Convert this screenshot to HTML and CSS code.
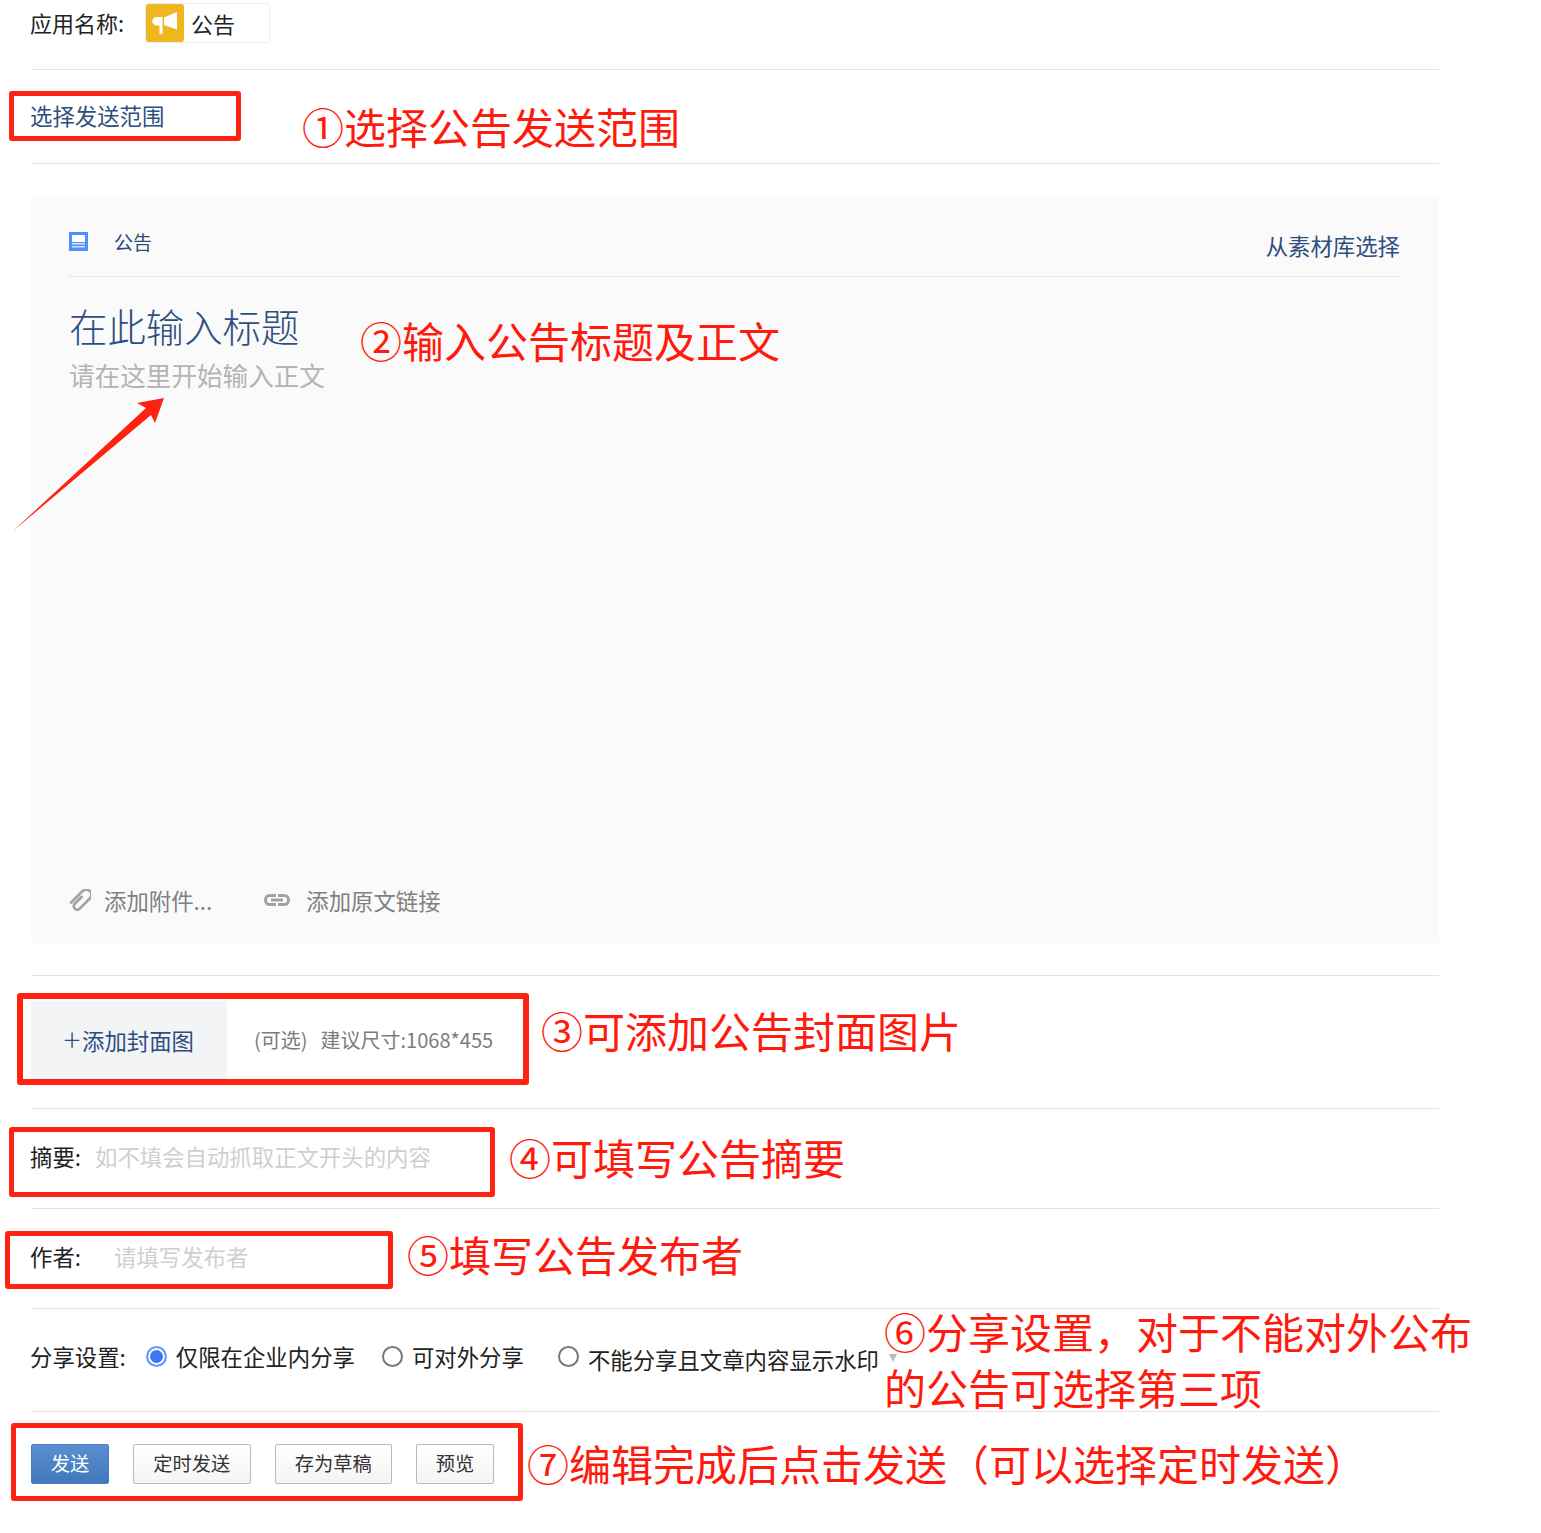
FILE: index.html
```html
<!DOCTYPE html>
<html lang="zh-CN">
<head>
  <meta charset="UTF-8" />
  <title>公告</title>
  <link rel="stylesheet" href="styles.css">
</head>
<body>
  <div class="page">

    <!-- App name -->
    <div class="row row-app">
      <span class="app-label">应用名称:</span>
      <div class="app-chip">
        <span class="app-icon">
          <svg viewBox="0 0 38 38" width="38" height="38" fill="#fff">
            <path d="M10.500 13H16.500V30H13.500V21.500H10.500A4.200 4.200 0 0 1 10.500 13z"/>
            <path d="M18 13.500L31 8V25.500L18 21z"/>
          </svg>
        </span>
        <span class="app-name">公告</span>
      </div>
    </div>

    <!-- Scope -->
    <div class="row row-scope">
      <a class="link">选择发送范围</a>
    </div>

    <!-- Editor -->
    <div class="editor-wrap">
      <div class="editor">
        <div class="editor-head">
          <div class="editor-type">
            <svg viewBox="0 0 19 19" width="19" height="19">
              <rect width="19" height="19" fill="#4d8ffb"/>
              <rect x="3" y="3" width="13" height="7" fill="#fff"/>
              <rect x="3" y="11" width="13" height="1.500" fill="#d5e4fe"/>
              <rect x="3" y="14" width="13" height="1.500" fill="#d5e4fe"/>
            </svg>
            <span>公告</span>
          </div>
          <a class="link library">从素材库选择</a>
        </div>
        <div class="editor-title">在此输入标题</div>
        <div class="editor-body">请在这里开始输入正文</div>
        <div class="editor-foot">
          <span class="foot-item">
            <svg viewBox="0 0 22 22" width="22" height="22" fill="none" stroke="#a3a3a3" stroke-width="2.400" stroke-linecap="round">
              <g transform="translate(11.500 11.500) rotate(45) scale(1.150)">
                <path d="M-1.500 -3V5.500a3 3 0 0 0 6 0V-7a4.500 4.500 0 0 0-9 0V7"/>
              </g>
            </svg>
            添加附件...
          </span>
          <span class="foot-item foot-link">
            <svg viewBox="0 0 26 12" width="26" height="12" fill="none" stroke="#a3a3a3" stroke-width="3">
              <path d="M12 1.500H5.500C3 1.500 1.500 3.500 1.500 6S3 10.500 5.500 10.500H12M14 1.500h6.500C23 1.500 24.500 3.500 24.500 6S23 10.500 20.500 10.500H14M7 6h12"/>
            </svg>
            添加原文链接
          </span>
        </div>
      </div>
    </div>

    <!-- Cover -->
    <div class="row row-cover">
      <div class="cover-btn"><span class="plus">＋</span>添加封面图</div>
      <div class="cover-hint"><span class="cover-opt">(可选)</span>建议尺寸:1068*455</div>
    </div>

    <!-- Summary -->
    <div class="row row-summary">
      <span>摘要:</span>
      <span class="placeholder summary-ph">如不填会自动抓取正文开头的内容</span>
    </div>

    <!-- Author -->
    <div class="row row-author">
      <span>作者:</span>
      <span class="placeholder author-ph">请填写发布者</span>
    </div>

    <!-- Share -->
    <div class="row row-share">
      <span>分享设置:</span>
      <span class="radio radio-on"></span>
      <span class="radio-text">仅限在企业内分享</span>
      <span class="radio radio-b"></span>
      <span class="radio-text">可对外分享</span>
      <span class="radio radio-c"></span>
      <span class="radio-text radio-text-c">不能分享且文章内容显示水印</span>
      <span class="caret"></span>
    </div>

    <!-- Buttons -->
    <div class="actions">
      <button class="btn btn-primary">发送</button>
      <button class="btn btn-wide">定时发送</button>
      <button class="btn btn-wide">存为草稿</button>
      <button class="btn">预览</button>
    </div>
  </div>

  <!-- Red annotations on top of the page -->
  <div class="mark mark-1"></div>
  <div class="mark mark-3"></div>
  <div class="mark mark-4"></div>
  <div class="mark mark-5"></div>
  <div class="mark mark-7"></div>

  <div class="note note-1">①选择公告发送范围</div>
  <div class="note note-2">②输入公告标题及正文</div>
  <div class="note note-3">③可添加公告封面图片</div>
  <div class="note note-4">④可填写公告摘要</div>
  <div class="note note-5">⑤填写公告发布者</div>
  <div class="note note-6">⑥分享设置，对于不能对外公布<br>的公告可选择第三项</div>
  <div class="note note-7">⑦编辑完成后点击发送（可以选择定时发送）</div>

  <svg class="arrow" viewBox="0 0 160 140" width="160" height="140">
    <polygon points="3,135 136,12 127,7 154,2 145,27 141,19" fill="#ff2211"/>
  </svg>
</body>
</html>
```

FILE: styles.css
```css
/* Basic reset */
* {
  box-sizing: border-box;
  margin: 0;
  padding: 0;
}
body {
  font-family: "Noto Sans CJK SC", "Liberation Sans", sans-serif;
  font-size: 22.400px;
  background: #fff;
  color: #222;
  position: relative;
  height: 1533px;
  overflow: hidden;
}

.page {
  width: 1408px;
  margin-left: 31px;
}

.row {
  display: flex;
  align-items: center;
  border-bottom: 1px solid #e4e4e4;
}
/* Row labels sit one pixel left of the rules */
.row > span:first-child,
.row > a:first-child {
  margin-left: -1px;
}

.link {
  color: #2d4f80;
}

/* App name */
.row-app {
  height: 70px;
  align-items: flex-start;
  padding-top: 3px;
}
.app-label {
  font-size: 22px;
  line-height: 39px;
  width: 115px;
}
.app-chip {
  display: flex;
  align-items: center;
  width: 125px;
  height: 40px;
  border: 1px solid #eee;
  border-radius: 3px;
}
.app-icon {
  width: 38px;
  height: 38px;
  background: #efb61f;
  border-radius: 3px;
}
.app-icon svg {
  display: block;
}
.app-name {
  margin-left: 7px;
  font-size: 22px;
}

/* Scope */
.row-scope {
  height: 94px;
  padding-bottom: 4px;
}

/* Editor */
.editor-wrap {
  padding: 32px 0;
  border-bottom: 1px solid #e4e4e4;
}
.editor {
  background: #fafafa;
  height: 747px;
  padding: 0 39px 0 38px;
  display: flex;
  flex-direction: column;
}
.editor-head {
  display: flex;
  justify-content: space-between;
  align-items: center;
  height: 81px;
  border-bottom: 1px solid #e7e7e7;
}
.editor-type {
  display: flex;
  align-items: center;
  gap: 26px;
  font-size: 19px;
  color: #2d4f80;
  margin-top: 10px;
}
.library {
  margin-top: 18px;
}
.editor-title {
  font-size: 38.400px;
  line-height: 50px;
  margin-top: 23px;
  color: #2d4f80;
  font-weight: 300;
}
.editor-body {
  font-size: 25.600px;
  line-height: 40px;
  margin-top: 5px;
  color: #b4b4b4;
}
.editor-foot {
  margin-top: auto;
  margin-bottom: 23px;
  display: flex;
  align-items: center;
  line-height: 40px;
  color: #808080;
}
.foot-item {
  display: flex;
  align-items: center;
  gap: 13px;
}
.foot-link {
  margin-left: 52px;
  gap: 16px;
}

/* Cover */
.row-cover {
  height: 133px;
  padding-bottom: 6px;
}
.cover-btn {
  width: 196px;
  height: 80px;
  background: #f3f4f6;
  color: #2d4f80;
  display: flex;
  align-items: center;
  justify-content: center;
  margin-top: 3px;
  padding: 0 2px 2px 0;
}
.plus {
  font-size: 20px;
}
.cover-hint {
  margin-left: 27px;
  font-size: 20px;
  color: #7c7c7c;
}
.cover-opt {
  margin-right: 13px;
}

/* Summary and author */
.row-summary,
.row-author {
  height: 100px;
  padding-bottom: 6px;
}
.placeholder {
  color: #cfcfcf;
}
.summary-ph {
  margin-left: 14px;
}
.author-ph {
  margin-left: 33px;
}

/* Share */
.row-share {
  height: 103px;
  padding-bottom: 8px;
}
.radio {
  width: 21px;
  height: 21px;
  border: 2px solid #777;
  border-radius: 50%;
  background: #fff;
  margin-top: 1px;
}
.radio-on {
  margin-left: 20px;
  border-color: #6b9cf5;
  background: #3c78f0;
  box-shadow: inset 0 0 0 2px #fff;
}
.radio-b {
  margin-left: 27px;
}
.radio-c {
  margin-left: 34px;
}
.radio-text {
  margin-left: 9px;
}
.radio-text-c {
  margin-top: 6px;
}
.caret {
  width: 0;
  height: 0;
  margin: 4px 0 0 10px;
  border-left: 4px solid transparent;
  border-right: 4px solid transparent;
  border-top: 8px solid #bbb;
}

/* Buttons */
.actions {
  display: flex;
  gap: 24px;
  padding-top: 32px;
}
.btn {
  font: inherit;
  font-size: 19.250px;
  width: 78px;
  height: 40px;
  padding-bottom: 2px;
  color: #333;
  background: linear-gradient(#fff, #f4f4f4);
  border: 1px solid #b9b9b9;
  border-radius: 2px;
}
.btn-wide {
  width: 117.500px;
}
.btn-primary {
  color: #fff;
  background: linear-gradient(#5b8fd0, #3f78bb);
  border-color: #4a7fc0;
}

/* Red boxes */
.mark {
  position: absolute;
  border: 5px solid #ff2211;
  border-radius: 3px;
}
.mark-1 { left: 9px; top: 91px; width: 232px; height: 50px; }
.mark-3 { left: 17px; top: 993px; width: 512px; height: 92px; border-width: 6px; }
.mark-4 { left: 9px; top: 1127px; width: 486px; height: 70px; }
.mark-5 { left: 5px; top: 1231px; width: 388px; height: 58px; }
.mark-7 { left: 11px; top: 1423px; width: 512px; height: 78px; }

/* Red notes */
.note {
  position: absolute;
  font-size: 42px;
  line-height: 56px;
  color: #ff1a0d;
  white-space: nowrap;
}
.note-1 { left: 302px; top: 98px; }
.note-2 { left: 360px; top: 312px; }
.note-3 { left: 541px; top: 1002px; }
.note-4 { left: 509px; top: 1129px; }
.note-5 { left: 407px; top: 1226px; }
.note-6 { left: 884px; top: 1303px; }
.note-7 { left: 527px; top: 1435px; }

.arrow {
  position: absolute;
  left: 10px;
  top: 396px;
}
```
